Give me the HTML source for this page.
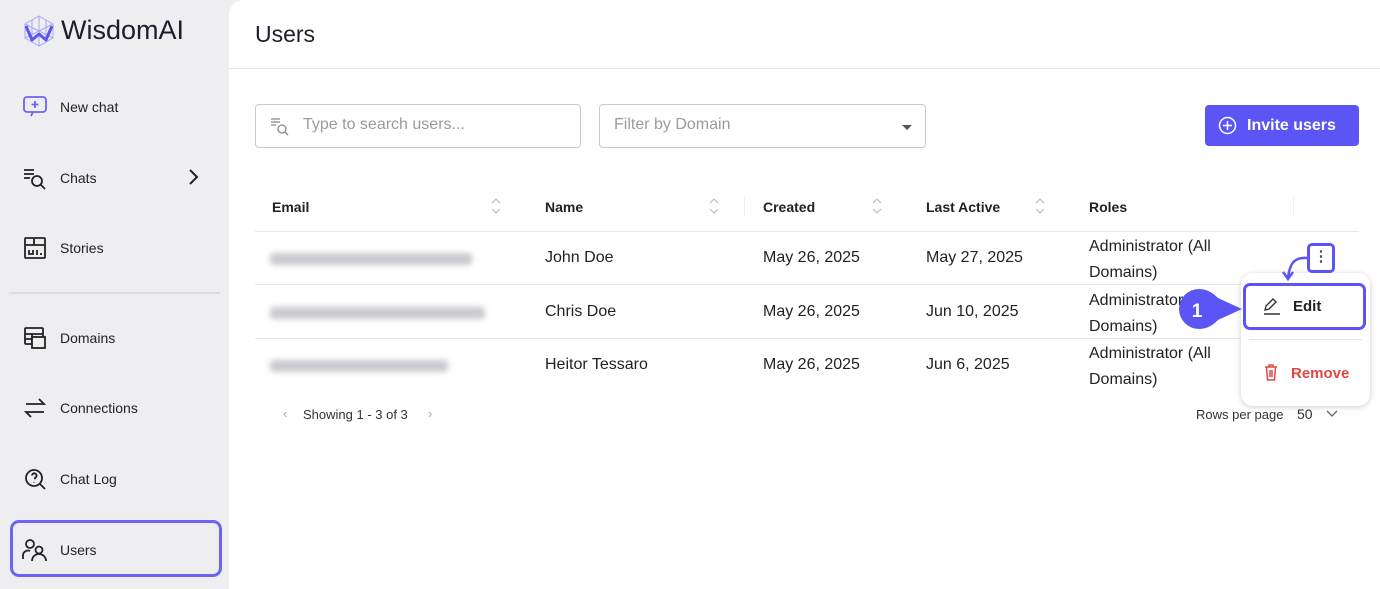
<!DOCTYPE html>
<html><head><meta charset="utf-8"><style>
*{box-sizing:border-box;margin:0;padding:0}
body{width:1380px;height:589px;overflow:hidden;background:#eeeef1;font-family:"Liberation Sans",sans-serif;color:#1d1d2b;position:relative}
.side{position:absolute;left:0;top:0;width:229px;height:589px}
.nav{position:absolute;left:22px;display:flex;align-items:center;font-size:14px;color:#222}
.nav svg{margin-right:12px;flex:0 0 26px;width:26px}
.main{position:absolute;left:229px;top:0;width:1151px;height:589px;background:#fff;border-top-left-radius:14px}
.abs{position:absolute}
.th{position:absolute;top:199px;font-size:14px;font-weight:bold;color:#222}
.td{position:absolute;font-size:16px;color:#222}
.blur{position:absolute;left:270px;height:12px;background:#c9c9cf;filter:blur(3px);border-radius:4px}
.line{position:absolute;left:255px;width:1104px;height:1px;background:#e6e6ea}
.sort{position:absolute;top:197px}
</style></head><body>
<div class="side">
  <svg class="abs" style="left:22px;top:14px" width="34" height="34" viewBox="0 0 34 34"><g fill="none" stroke="#a9a4ff" stroke-width="1"><path d="M17 2L31 10V24L17 32L3 24V10Z"/><path d="M17 2V32M3 10L31 24M31 10L3 24M10 6V28M24 6V28"/></g><path d="M4 12L10 26L17 20L24 26L30 12" fill="none" stroke="#5b55f5" stroke-width="3" stroke-linejoin="round"/></svg>
  <div class="abs" style="left:61px;top:15px;font-size:27px;color:#1d1d2b">WisdomAI</div>
  <div class="nav" style="top:95px"><svg width="26" height="24" viewBox="0 0 26 24" fill="none" stroke="#6a63f6" stroke-width="1.8"><rect x="2" y="2" width="22" height="15" rx="3"/><path d="M13 6v7M9.5 9.5h7M11 17l-2 4"/></svg>New chat</div>
  <div class="nav" style="top:166px"><svg width="26" height="24" viewBox="0 0 24 24" fill="none" stroke="#222" stroke-width="1.8"><path d="M1 4h10M1 8h10M1 12h6"/><circle cx="14" cy="15" r="5"/><path d="M18 19l4 4"/></svg>Chats</div>
  <svg class="abs" style="left:187px;top:168px" width="12" height="18" viewBox="0 0 12 18" fill="none" stroke="#222" stroke-width="2"><path d="M3 2l7 7-7 7"/></svg>
  <div class="nav" style="top:236px"><svg width="26" height="24" viewBox="0 0 24 24" fill="none" stroke="#222" stroke-width="1.8"><rect x="2" y="2" width="20" height="20" rx="1"/><path d="M2 9h20M11 2v7M6 14v4h4v-4M14 14v5M18 17v2"/></svg>Stories</div>
  <div class="abs" style="left:9px;top:292px;width:211px;height:2px;background:#dcdce0"></div>
  <div class="nav" style="top:326px"><svg width="26" height="24" viewBox="0 0 24 24" fill="none" stroke="#222" stroke-width="1.8"><rect x="2" y="2" width="18" height="16" rx="1"/><path d="M2 8h18M2 13h18M9 8v10"/><rect x="9" y="11" width="13" height="11" fill="#eeeef1"/></svg>Domains</div>
  <div class="nav" style="top:396px"><svg width="26" height="24" viewBox="0 0 24 24" fill="none" stroke="#222" stroke-width="1.8"><path d="M3 8h18l-5-5M21 16H3l5 5"/></svg>Connections</div>
  <div class="nav" style="top:467px"><svg width="26" height="24" viewBox="0 0 24 24" fill="none" stroke="#222" stroke-width="1.8"><circle cx="11" cy="11" r="8"/><path d="M17 17l5 5M9 8.5a2.3 2.3 0 1 1 3 2.3v1.5M11 15v.5"/></svg>Chat Log</div>
  <div class="abs" style="left:10px;top:520px;width:212px;height:57px;border:3px solid #6a63f6;border-radius:9px"></div>
  <div class="nav" style="top:538px"><svg width="26" height="24" viewBox="0 0 26 24" fill="none" stroke="#222" stroke-width="1.8"><circle cx="8" cy="6" r="4"/><path d="M1 21v-3a5 5 0 0 1 7-5"/><circle cx="17" cy="12" r="3.5"/><path d="M10 23a7 7 0 0 1 14 0"/></svg>Users</div>
</div>
<div class="main"></div>
<div class="abs" style="left:255px;top:21px;font-size:23px;color:#1d1d2b">Users</div>
<div class="abs" style="left:229px;top:68px;width:1151px;height:1px;background:#e6e6ea"></div>
<div class="abs" style="left:255px;top:104px;width:326px;height:44px;border:1px solid #c8c8ce;border-radius:4px"></div>
<svg class="abs" style="left:270px;top:116px" width="20" height="20" viewBox="0 0 20 20" fill="none" stroke="#888" stroke-width="1.3"><path d="M1 3h9M1 6h9M1 9h5"/><circle cx="12" cy="13" r="4"/><path d="M15 16l3 3"/></svg>
<div class="abs" style="left:303px;top:116px;font-size:16px;color:#9a9aa2">Type to search users...</div>
<div class="abs" style="left:599px;top:104px;width:327px;height:44px;border:1px solid #c8c8ce;border-radius:4px"></div>
<div class="abs" style="left:614px;top:116px;font-size:16px;color:#9a9aa2">Filter by Domain</div>
<div class="abs" style="left:902px;top:125px;border:5px solid transparent;border-top:5px solid #555"></div>
<div class="abs" style="left:1205px;top:105px;width:154px;height:41px;background:#5b55f5;border-radius:4px;color:#fff;font-weight:bold;font-size:16px;line-height:41px;padding-left:42px">Invite users</div>
<svg class="abs" style="left:1218px;top:116px" width="19" height="19" viewBox="0 0 19 19" fill="none" stroke="#fff" stroke-width="1.5"><circle cx="9.5" cy="9.5" r="8"/><path d="M9.5 5v9M5 9.5h9"/></svg>
<div class="th" style="left:272px">Email</div><div class="th" style="left:545px">Name</div><div class="th" style="left:763px">Created</div><div class="th" style="left:926px">Last Active</div><div class="th" style="left:1089px">Roles</div>
<svg class="sort" style="left:491px" width="10" height="18" viewBox="0 0 10 18" fill="none" stroke="#c4c4cc" stroke-width="1.3"><path d="M1 6l4-4 4 4M1 12l4 4 4-4"/></svg>
<svg class="sort" style="left:709px" width="10" height="18" viewBox="0 0 10 18" fill="none" stroke="#c4c4cc" stroke-width="1.3"><path d="M1 6l4-4 4 4M1 12l4 4 4-4"/></svg>
<svg class="sort" style="left:872px" width="10" height="18" viewBox="0 0 10 18" fill="none" stroke="#c4c4cc" stroke-width="1.3"><path d="M1 6l4-4 4 4M1 12l4 4 4-4"/></svg>
<svg class="sort" style="left:1035px" width="10" height="18" viewBox="0 0 10 18" fill="none" stroke="#c4c4cc" stroke-width="1.3"><path d="M1 6l4-4 4 4M1 12l4 4 4-4"/></svg>
<div class="abs" style="left:744px;top:196px;width:1px;height:20px;background:#eee"></div>
<div class="abs" style="left:1293px;top:196px;width:1px;height:20px;background:#eee"></div>
<div class="line" style="top:231px"></div><div class="line" style="top:284px"></div><div class="line" style="top:338px"></div>
<div class="blur" style="top:253px;width:202px"></div><div class="blur" style="top:307px;width:215px"></div><div class="blur" style="top:360px;width:178px"></div>
<div class="td" style="left:545px;top:249px">John Doe</div><div class="td" style="left:763px;top:249px">May 26, 2025</div><div class="td" style="left:926px;top:249px">May 27, 2025</div>
<div class="td" style="left:1089px;top:234px;line-height:26px">Administrator (All<br>Domains)</div>
<div class="td" style="left:545px;top:303px">Chris Doe</div><div class="td" style="left:763px;top:303px">May 26, 2025</div><div class="td" style="left:926px;top:303px">Jun 10, 2025</div>
<div class="td" style="left:1089px;top:288px;line-height:26px">Administrator (All<br>Domains)</div>
<div class="td" style="left:545px;top:356px">Heitor Tessaro</div><div class="td" style="left:763px;top:356px">May 26, 2025</div><div class="td" style="left:926px;top:356px">Jun 6, 2025</div>
<div class="td" style="left:1089px;top:341px;line-height:26px">Administrator (All<br>Domains)</div>
<div class="abs" style="left:283px;top:406px;font-size:13px;color:#aaa">‹</div>
<div class="abs" style="left:303px;top:407px;font-size:13px;color:#333">Showing 1 - 3 of 3</div>
<div class="abs" style="left:428px;top:406px;font-size:13px;color:#aaa">›</div>
<div class="abs" style="left:1196px;top:407px;font-size:13px;color:#333">Rows per page</div>
<div class="abs" style="left:1297px;top:406px;font-size:14px;color:#333">50</div>
<svg class="abs" style="left:1326px;top:410px" width="12" height="8" viewBox="0 0 12 8" fill="none" stroke="#666" stroke-width="1.3"><path d="M1 1l5 5 5-5"/></svg>
<div class="abs" style="left:1241px;top:273px;width:129px;height:133px;background:#fff;border-radius:12px;box-shadow:0 1px 6px rgba(0,0,0,.2)"></div>
<div class="abs" style="left:1307px;top:243px;width:28px;height:30px;border:3px solid #5b55f5;border-radius:5px;background:#fff;text-align:center;font-size:15px;line-height:22px;color:#555;font-weight:bold">⋮</div>
<svg class="abs" style="left:1276px;top:252px" width="36" height="30" viewBox="0 0 36 30" fill="none" stroke="#5b55f5" stroke-width="2.5"><path d="M32 6C20 5 14 9 12 26M7 20l5 7 5-7"/></svg>
<div class="abs" style="left:1243px;top:283px;width:123px;height:47px;border:3px solid #5b55f5;border-radius:7px;background:#fff"></div>
<svg class="abs" style="left:1263px;top:297px" width="18" height="18" viewBox="0 0 18 18" fill="none" stroke="#333" stroke-width="1.4"><path d="M2 13l1-4 7-7 3 3-7 7zM1 17h16"/></svg>
<div class="abs" style="left:1293px;top:298px;font-size:15px;font-weight:bold;color:#222">Edit</div>
<div class="abs" style="left:1249px;top:339px;width:113px;height:1px;background:#e6e6ea"></div>
<svg class="abs" style="left:1264px;top:364px" width="14" height="17" viewBox="0 0 14 17" fill="none" stroke="#e04848" stroke-width="1.5"><path d="M1 3h12M5 3V1h4v2M2.5 3l1 13h7l1-13M6 6v7M8 6v7"/></svg>
<div class="abs" style="left:1291px;top:365px;font-size:15px;font-weight:bold;color:#e04848">Remove</div>
<svg class="abs" style="left:1178px;top:288px" width="66" height="42" viewBox="0 0 66 42"><path d="M21 1C30 1 36 6 40 10L64 21 40 32C36 36 30 41 21 41A20 20 0 0 1 21 1Z" fill="#5b55f5"/><text x="19" y="29" font-size="19" fill="#fff" font-family="Liberation Sans" text-anchor="middle" font-weight="bold">1</text></svg>
</body></html>
